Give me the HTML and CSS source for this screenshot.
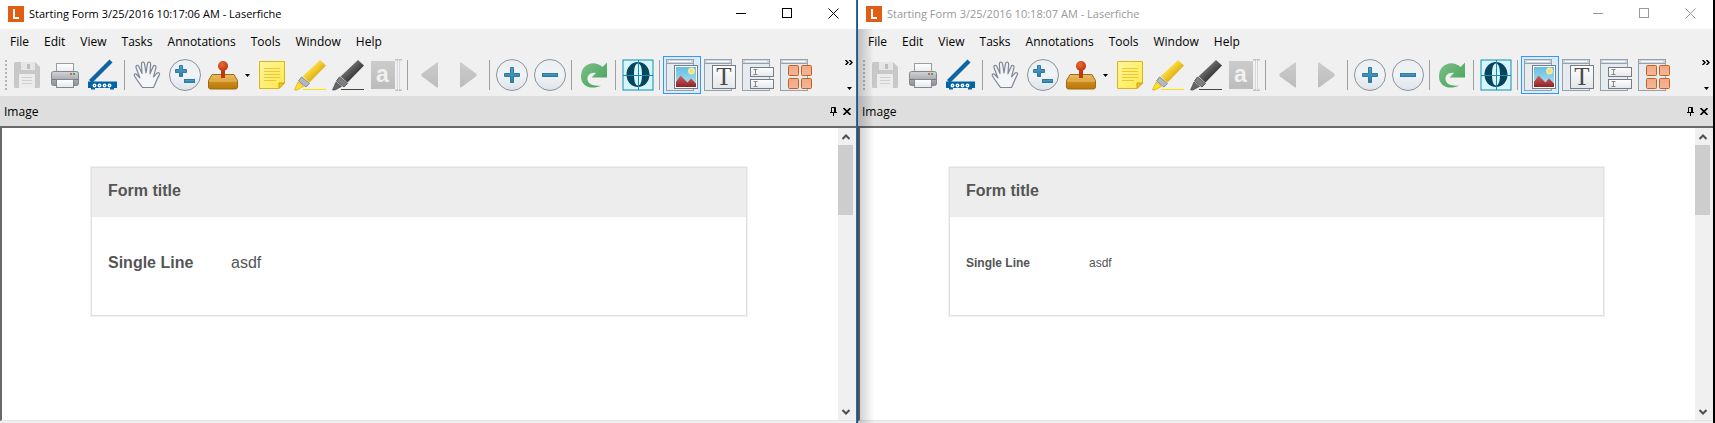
FILE: index.html
```
<!DOCTYPE html>
<html lang="en">
<head>
<meta charset="UTF-8">
<meta name="viewport" content="width=device-width, initial-scale=1.0">
<title>Laserfiche</title>
<link rel="stylesheet" href="styles.css">
</head>
<body>

<!-- toolbar icons, shared by both windows -->
<svg class="icon-defs" aria-hidden="true">
    <defs>
        <linearGradient id="gMetal" x1="0" y1="0" x2="0" y2="1"><stop offset="0" stop-color="#d2d4d8"/><stop offset="1" stop-color="#8b8e94"/></linearGradient>
        <linearGradient id="gPaper" x1="0" y1="0" x2="0" y2="1"><stop offset="0" stop-color="#ffffff"/><stop offset="1" stop-color="#e4e6e9"/></linearGradient>
        <linearGradient id="gCircle" x1="0" y1="0" x2="0" y2="1"><stop offset="0" stop-color="#eceff2"/><stop offset="0.5" stop-color="#f1f3f5"/><stop offset="1" stop-color="#dde4ea"/></linearGradient>
        <linearGradient id="gBlue" x1="0" y1="0" x2="0" y2="1"><stop offset="0" stop-color="#53a6cb"/><stop offset="1" stop-color="#2c7aa6"/></linearGradient>
        <linearGradient id="gGold" x1="0" y1="0" x2="0" y2="1"><stop offset="0" stop-color="#e8bb6a"/><stop offset="0.45" stop-color="#dea53f"/><stop offset="0.55" stop-color="#c98a17"/><stop offset="1" stop-color="#b97708"/></linearGradient>
        <radialGradient id="gKnob" cx="0.4" cy="0.35" r="0.6"><stop offset="0" stop-color="#ee6b35"/><stop offset="1" stop-color="#bd3a0f"/></radialGradient>
        <linearGradient id="gNote" x1="0" y1="0" x2="1" y2="1"><stop offset="0" stop-color="#fff6a0"/><stop offset="1" stop-color="#ffe94a"/></linearGradient>
        <linearGradient id="gYellow" x1="0" y1="0" x2="1" y2="1"><stop offset="0.3" stop-color="#ffe64d"/><stop offset="0.7" stop-color="#dca80c"/></linearGradient>
        <linearGradient id="gBlack" x1="0" y1="0" x2="1" y2="1"><stop offset="0.3" stop-color="#777777"/><stop offset="0.7" stop-color="#303030"/></linearGradient>
        <linearGradient id="gGray" x1="0" y1="0" x2="0" y2="1"><stop offset="0" stop-color="#cccccc"/><stop offset="1" stop-color="#bcbcbc"/></linearGradient>
        <linearGradient id="gGreen" x1="0" y1="0" x2="1" y2="1"><stop offset="0" stop-color="#7cc08a"/><stop offset="1" stop-color="#44a156"/></linearGradient>
        <linearGradient id="gSky" x1="0" y1="0" x2="0" y2="1"><stop offset="0" stop-color="#62bfe2"/><stop offset="1" stop-color="#b5e2ef"/></linearGradient>
        <linearGradient id="gRed" x1="0" y1="0" x2="0" y2="1"><stop offset="0" stop-color="#d85c5c"/><stop offset="1" stop-color="#8d2428"/></linearGradient>
        <linearGradient id="gTile" x1="0" y1="0" x2="0" y2="1"><stop offset="0" stop-color="#f3a987"/><stop offset="1" stop-color="#f4b595"/></linearGradient>
    </defs>

    <symbol id="logo" viewBox="0 0 16 16">
        <rect width="16" height="16" fill="#e05e14"/>
        <path d="M6 3v9h5" fill="none" stroke="#fff" stroke-width="2"/>
    </symbol>

    <symbol id="save" viewBox="0 0 32 32">
        <path d="M3 4.500Q3 3 4.500 3H24l5 5v19.500q0 1.500-1.500 1.500h-23Q3 29 3 27.500z" fill="#c8c8c8"/>
        <rect x="10" y="3" width="14" height="8" fill="#e6e6e6"/>
        <rect x="16" y="5" width="3" height="5" fill="#bdbdbd"/>
        <rect x="8" y="15" width="16" height="14" fill="#ececec"/>
        <path d="M11 18.500h10M11 21.500h10M11 24.500h10" stroke="#cfcfcf"/>
    </symbol>

    <symbol id="print" viewBox="0 0 32 32">
        <rect x="7.500" y="4.500" width="17" height="11" fill="url(#gPaper)" stroke="#9a9da2"/>
        <rect x="2.500" y="12.500" width="27" height="14" rx="2" fill="url(#gMetal)" stroke="#84878d"/>
        <path d="M3 20.500h26" stroke="#777a80"/>
        <rect x="21" y="14" width="2" height="2" fill="#ee5b2c"/>
        <rect x="24" y="14" width="2" height="2" fill="#3daa62"/>
        <rect x="7.500" y="20.500" width="17" height="8" fill="url(#gPaper)" stroke="#84878d"/>
    </symbol>

    <symbol id="scan" viewBox="0 0 32 32">
        <path d="M3.500 22.500L24 2" stroke="#0f65a3" stroke-width="4.200"/>
        <path d="M1 22.500h29v6.500h-3v1.500h-4v-1.500H8v1.500H4v-1.500H1z" fill="#0064a8"/>
        <g fill="#fff"><circle cx="7.500" cy="26.500" r="1.900"/><circle cx="12.500" cy="26.500" r="1.900"/><circle cx="17.500" cy="26.500" r="1.900"/><circle cx="22.500" cy="26.500" r="1.900"/></g>
        <g fill="#0064a8"><circle cx="7.500" cy="26.500" r=".5"/><circle cx="12.500" cy="26.500" r=".5"/><circle cx="17.500" cy="26.500" r=".5"/><circle cx="22.500" cy="26.500" r=".5"/></g>
    </symbol>

    <symbol id="hand" viewBox="0 0 32 32">
        <path d="M11.500 28.500C9 25 5.500 20.500 3.500 17c-.8-2 .9-2.800 2.200-1.500l3.100 3.300L5 8.500c-.5-2.300 2-2.900 2.900-1L11 14.500l-.6-9.700c0-2.300 2.700-2.300 3.100-.2L15 14l1.500-9.400c.5-2 3.100-1.800 3.100.3L19 14.800l3.200-7.300c.9-1.800 3.100-1 2.800.9l-2.500 9.400 3.500-3.600c1.400-1.200 3.400-.1 2.300 1.700C26 20 24.500 24 22.500 28.500z" fill="#f4f5f7" stroke="#7f8796" stroke-width="1.200" stroke-linejoin="round"/>
    </symbol>

    <symbol id="zoom" viewBox="0 0 32 32">
        <circle cx="16" cy="16" r="15.500" fill="url(#gCircle)" stroke="#8a929c"/>
        <path d="M10.500 6.500h3v4h4v3h-4v4h-3v-4h-4v-3h4z" fill="url(#gBlue)" stroke="#2d7ba5"/>
        <rect x="15.500" y="20.500" width="10" height="3" fill="url(#gBlue)" stroke="#2d7ba5"/>
    </symbol>

    <symbol id="stamp" viewBox="0 0 32 32">
        <path d="M5 15.500h22l3.500 6v6.500q0 2-2 2h-25q-2 0-2-2v-6.500z" fill="url(#gGold)" stroke="#a06a10"/>
        <path d="M2 22h28" stroke="#e5b357"/>
        <rect x="14" y="9" width="4" height="10" fill="#bd3a0f"/>
        <circle cx="16" cy="7" r="5" fill="url(#gKnob)"/>
    </symbol>

    <symbol id="note" viewBox="0 0 32 32">
        <path d="M3.500 2.500h25v21.500l-6 5.500h-19z" fill="url(#gNote)" stroke="#dcb31b"/>
        <path d="M28.500 24h-5.500v5.500z" fill="#f3c71c" stroke="#cf9d14"/>
        <path d="M8 9.500h16M8 12.500h16M8 15.500h16M8 18.500h16M8 21.500h12" stroke="#f3c52e"/>
    </symbol>

    <symbol id="marker" viewBox="0 0 32 32">
        <path d="M9 30.500h23" stroke="#ffe100"/>
        <path d="M26 1l6 5.500L15.500 23.500l-7-6z" fill="url(#gYellow)"/>
        <path d="M7.500 18l8 6.500-3.500 3.500-7.500-6z" fill="#b5b8bd" stroke="#898c91"/>
        <path d="M4 23l5.500 4.500L3 31H.5z" fill="#ffe21c" stroke="#c9a210" stroke-width=".6"/>
    </symbol>

    <symbol id="blackout" viewBox="0 0 32 32">
        <path d="M9 30.500h23" stroke="#444"/>
        <path d="M26 1l6 5.500L15.500 23.500l-7-6z" fill="url(#gBlack)"/>
        <path d="M7.500 18l8 6.500-3.500 3.500-7.500-6z" fill="#7d7f83" stroke="#595b5f"/>
        <path d="M4 23l5.500 4.500L3 31H.5z" fill="#666" stroke="#3c3c3c" stroke-width=".6"/>
    </symbol>

    <symbol id="textbox" viewBox="0 0 32 32">
        <rect x="1" y="2" width="24" height="28" fill="url(#gGray)"/>
        <path d="M25 .5h2l1.500 1 1.500-1h2M28.500 1v30M25 31.500h2l1.500-1 1.500 1h2" fill="none" stroke="#c2c2c2" stroke-width="2"/>
        <path d="M28.500 1v30" stroke="#f2f2f2"/>
    </symbol>

    <symbol id="prev" viewBox="0 0 32 32">
        <path d="M24 4v24q0 .8-1 .5L8 17.500q-1.500-1.500 0-3l15-11q1-.3 1 .5z" fill="url(#gGray)"/>
    </symbol>

    <symbol id="next" viewBox="0 0 32 32">
        <path d="M8 4v24q0 .8 1 .5l15-11q1.500-1.500 0-3l-15-11q-1-.3-1 .5z" fill="url(#gGray)"/>
    </symbol>

    <symbol id="plus" viewBox="0 0 32 32">
        <circle cx="16" cy="16" r="15.500" fill="url(#gCircle)" stroke="#8a929c"/>
        <path d="M14.500 8.500h3v6h6v3h-6v6h-3v-6h-6v-3h6z" fill="url(#gBlue)" stroke="#2d7ba5"/>
    </symbol>

    <symbol id="minus" viewBox="0 0 32 32">
        <circle cx="16" cy="16" r="15.500" fill="url(#gCircle)" stroke="#8a929c"/>
        <rect x="8.500" y="14.500" width="15" height="3" fill="url(#gBlue)" stroke="#2d7ba5"/>
    </symbol>

    <symbol id="refresh" viewBox="0 0 32 32">
        <path d="M24.500 8L29 3.500V18.500H13.500l4.500-4.500c-5-1-9 2-8.500 6.500.5 4.500 5.500 7 13.500 6C15 31 3 28.500 3 17.500 3 5 16 .5 24.500 8z" fill="url(#gGreen)"/>
    </symbol>

    <symbol id="omni" viewBox="0 0 32 32">
        <rect x="1" y="1" width="30" height="30" fill="#d5f6fd" stroke="#148db0"/>
        <path d="M16 3C22.500 3 27.500 8.500 27.500 15.500S22.500 28 16 28 4.500 22.500 4.500 15.500 9.500 3 16 3zm0 1.500c-3 0-4 5-4 11s1 11 4 11 4-5 4-11-1-11-4-11z" fill="#07455c" fill-rule="evenodd"/>
        <path d="M16.500 1v30M1 16.500h30" stroke="#148db0"/>
    </symbol>

    <!-- window frame under the four view icons -->
    <symbol id="pane" viewBox="0 0 32 32">
        <rect x=".5" y=".5" width="27" height="31" fill="#e6ebef" stroke="#98a0aa"/>
        <rect x="1" y="1" width="26" height="3" fill="#c9d6e3"/>
        <path d="M3 2.500h22" stroke="#fff"/>
        <path d="M1 4.500h26" stroke="#98a0aa"/>
    </symbol>

    <symbol id="view-image" viewBox="0 0 32 32">
        <use href="#pane"/>
        <rect x="8.500" y="6.500" width="23" height="23" fill="#fff" stroke="#747c88"/>
        <rect x="10" y="8" width="20" height="20" fill="url(#gSky)"/>
        <circle cx="25.500" cy="12" r="3.500" fill="#f4e9a6"/><circle cx="25.500" cy="12" r="2" fill="#f8dc6e"/>
        <path d="M10 28v-5l4.500-6.500 7 7 3.500-4 5 5V28z" fill="url(#gRed)"/>
    </symbol>

    <symbol id="view-text" viewBox="0 0 32 32">
        <use href="#pane"/>
        <rect x="8.500" y="6.500" width="23" height="23" fill="url(#gPaper)" stroke="#747c88"/>
    </symbol>

    <symbol id="view-fields" viewBox="0 0 32 32">
        <use href="#pane"/>
        <g fill="url(#gPaper)" stroke="#747c88"><rect x="8.500" y="8.500" width="23" height="9"/><rect x="8.500" y="20.500" width="23" height="9"/></g>
        <path d="M11.500 10.500h4M13.500 10.500v5M11.500 15.500h4M11.500 22.500h4M13.500 22.500v5M11.500 27.500h4" stroke="#888"/>
    </symbol>

    <symbol id="view-thumbs" viewBox="0 0 32 32">
        <use href="#pane"/>
        <g fill="url(#gTile)" stroke="#c2601f"><rect x="8.500" y="6.500" width="10" height="10" rx="1"/><rect x="21.500" y="6.500" width="10" height="10" rx="1"/><rect x="8.500" y="19.500" width="10" height="10" rx="1"/><rect x="21.500" y="19.500" width="10" height="10" rx="1"/></g>
    </symbol>

    <symbol id="win-min" viewBox="0 0 11 11"><path d="M0 5.500h10" stroke="currentColor"/></symbol>
    <symbol id="win-max" viewBox="0 0 11 11"><rect x=".5" y=".5" width="9" height="9" fill="none" stroke="currentColor"/></symbol>
    <symbol id="win-close" viewBox="0 0 11 11"><path d="M.5.5l10 10M10.500.5l-10 10" stroke="currentColor"/></symbol>
    <symbol id="caret" viewBox="0 0 5 3"><path d="M0 0h5L2.500 3z"/></symbol>
    <symbol id="chevrons" viewBox="0 0 8 5"><path d="M.5 0L3 2.500.5 5M4.500 0L7 2.500 4.500 5" fill="none" stroke="#000" stroke-width="1.500"/></symbol>
    <symbol id="pin" viewBox="0 0 7 9"><path d="M1.500 5V.5h4V5M4.500 1v4M0 5.500h7M3.500 6v3" fill="none" stroke="#000"/></symbol>
    <symbol id="cross" viewBox="0 0 8 7"><path d="M.5 0l7 7M7.500 0l-7 7" stroke="#000" stroke-width="1.600"/></symbol>
    <symbol id="arrow-up" viewBox="0 0 8 6"><path d="M.5 5L4 1.500 7.500 5" fill="none" stroke="#505050" stroke-width="2"/></symbol>
    <symbol id="arrow-down" viewBox="0 0 8 6"><path d="M.5 1L4 4.500 7.500 1" fill="none" stroke="#505050" stroke-width="2"/></symbol>
</svg>

<main class="desktop">

    <section class="window active">
        <header class="titlebar">
            <svg class="logo"><use href="#logo"/></svg>
            <h1>Starting Form 3/25/2016 10:17:06 AM - Laserfiche</h1>
            <button class="win-button" aria-label="Minimize"><svg><use href="#win-min"/></svg></button>
            <button class="win-button" aria-label="Maximize"><svg><use href="#win-max"/></svg></button>
            <button class="win-button" aria-label="Close"><svg><use href="#win-close"/></svg></button>
        </header>
        <nav class="menubar">
            <button>File</button>
            <button>Edit</button>
            <button>View</button>
            <button>Tasks</button>
            <button>Annotations</button>
            <button>Tools</button>
            <button>Window</button>
            <button>Help</button>
        </nav>
        <div class="toolbar">
            <span class="grip"></span>
            <button class="tool" aria-label="Save" disabled><svg><use href="#save"/></svg></button>
            <button class="tool" aria-label="Print"><svg><use href="#print"/></svg></button>
            <button class="tool" aria-label="Scan"><svg><use href="#scan"/></svg></button>
            <span class="sep"></span>
            <button class="tool" aria-label="Pan"><svg><use href="#hand"/></svg></button>
            <button class="tool" aria-label="Zoom"><svg><use href="#zoom"/></svg></button>
            <button class="tool" aria-label="Stamp"><svg><use href="#stamp"/></svg></button>
            <button class="drop" aria-label="Choose stamp"><svg><use href="#caret"/></svg></button>
            <button class="tool" aria-label="Sticky note"><svg><use href="#note"/></svg></button>
            <button class="tool" aria-label="Highlight"><svg><use href="#marker"/></svg></button>
            <button class="tool" aria-label="Black out"><svg><use href="#blackout"/></svg></button>
            <button class="tool" aria-label="Select text" disabled><svg><use href="#textbox"/><text x="6" y="23" class="glyph-a">a</text></svg></button>
            <span class="sep"></span>
            <button class="tool" aria-label="Previous page" disabled><svg><use href="#prev"/></svg></button>
            <button class="tool" aria-label="Next page" disabled><svg><use href="#next"/></svg></button>
            <span class="sep"></span>
            <button class="tool" aria-label="Zoom in"><svg><use href="#plus"/></svg></button>
            <button class="tool" aria-label="Zoom out"><svg><use href="#minus"/></svg></button>
            <span class="sep"></span>
            <button class="tool" aria-label="Rotate"><svg><use href="#refresh"/></svg></button>
            <span class="sep"></span>
            <button class="tool" aria-label="OCR"><svg><use href="#omni"/></svg></button>
            <span class="sep"></span>
            <button class="tool selected" aria-label="Image pane"><svg><use href="#view-image"/></svg></button>
            <button class="tool" aria-label="Text pane"><svg><use href="#view-text"/><text x="20" y="26" class="glyph-t">T</text></svg></button>
            <button class="tool" aria-label="Fields pane"><svg><use href="#view-fields"/></svg></button>
            <button class="tool" aria-label="Thumbnails pane"><svg><use href="#view-thumbs"/></svg></button>
            <button class="overflow" aria-label="More buttons">
                <svg class="chevrons"><use href="#chevrons"/></svg>
                <svg class="caret"><use href="#caret"/></svg>
            </button>
        </div>
        <div class="pane-header">
            <h2>Image</h2>
            <button aria-label="Pin"><svg class="pin"><use href="#pin"/></svg></button>
            <button aria-label="Close pane"><svg class="cross"><use href="#cross"/></svg></button>
        </div>
        <div class="viewer">
            <div class="page">
                <div class="form">
                    <h3>Form title</h3>
                    <dl>
                        <dt>Single Line</dt>
                        <dd>asdf</dd>
                    </dl>
                </div>
            </div>
            <div class="scrollbar">
                <button aria-label="Scroll up"><svg><use href="#arrow-up"/></svg></button>
                <div class="track"><div class="thumb"></div></div>
                <button aria-label="Scroll down"><svg><use href="#arrow-down"/></svg></button>
            </div>
        </div>
    </section>

    <section class="window inactive">
        <header class="titlebar">
            <svg class="logo"><use href="#logo"/></svg>
            <h1>Starting Form 3/25/2016 10:18:07 AM - Laserfiche</h1>
            <button class="win-button" aria-label="Minimize"><svg><use href="#win-min"/></svg></button>
            <button class="win-button" aria-label="Maximize"><svg><use href="#win-max"/></svg></button>
            <button class="win-button" aria-label="Close"><svg><use href="#win-close"/></svg></button>
        </header>
        <nav class="menubar">
            <button>File</button>
            <button>Edit</button>
            <button>View</button>
            <button>Tasks</button>
            <button>Annotations</button>
            <button>Tools</button>
            <button>Window</button>
            <button>Help</button>
        </nav>
        <div class="toolbar">
            <span class="grip"></span>
            <button class="tool" aria-label="Save" disabled><svg><use href="#save"/></svg></button>
            <button class="tool" aria-label="Print"><svg><use href="#print"/></svg></button>
            <button class="tool" aria-label="Scan"><svg><use href="#scan"/></svg></button>
            <span class="sep"></span>
            <button class="tool" aria-label="Pan"><svg><use href="#hand"/></svg></button>
            <button class="tool" aria-label="Zoom"><svg><use href="#zoom"/></svg></button>
            <button class="tool" aria-label="Stamp"><svg><use href="#stamp"/></svg></button>
            <button class="drop" aria-label="Choose stamp"><svg><use href="#caret"/></svg></button>
            <button class="tool" aria-label="Sticky note"><svg><use href="#note"/></svg></button>
            <button class="tool" aria-label="Highlight"><svg><use href="#marker"/></svg></button>
            <button class="tool" aria-label="Black out"><svg><use href="#blackout"/></svg></button>
            <button class="tool" aria-label="Select text" disabled><svg><use href="#textbox"/><text x="6" y="23" class="glyph-a">a</text></svg></button>
            <span class="sep"></span>
            <button class="tool" aria-label="Previous page" disabled><svg><use href="#prev"/></svg></button>
            <button class="tool" aria-label="Next page" disabled><svg><use href="#next"/></svg></button>
            <span class="sep"></span>
            <button class="tool" aria-label="Zoom in"><svg><use href="#plus"/></svg></button>
            <button class="tool" aria-label="Zoom out"><svg><use href="#minus"/></svg></button>
            <span class="sep"></span>
            <button class="tool" aria-label="Rotate"><svg><use href="#refresh"/></svg></button>
            <span class="sep"></span>
            <button class="tool" aria-label="OCR"><svg><use href="#omni"/></svg></button>
            <span class="sep"></span>
            <button class="tool selected" aria-label="Image pane"><svg><use href="#view-image"/></svg></button>
            <button class="tool" aria-label="Text pane"><svg><use href="#view-text"/><text x="20" y="26" class="glyph-t">T</text></svg></button>
            <button class="tool" aria-label="Fields pane"><svg><use href="#view-fields"/></svg></button>
            <button class="tool" aria-label="Thumbnails pane"><svg><use href="#view-thumbs"/></svg></button>
            <button class="overflow" aria-label="More buttons">
                <svg class="chevrons"><use href="#chevrons"/></svg>
                <svg class="caret"><use href="#caret"/></svg>
            </button>
        </div>
        <div class="pane-header">
            <h2>Image</h2>
            <button aria-label="Pin"><svg class="pin"><use href="#pin"/></svg></button>
            <button aria-label="Close pane"><svg class="cross"><use href="#cross"/></svg></button>
        </div>
        <div class="viewer">
            <div class="page">
                <div class="form small">
                    <h3>Form title</h3>
                    <dl>
                        <dt>Single Line</dt>
                        <dd>asdf</dd>
                    </dl>
                </div>
            </div>
            <div class="scrollbar">
                <button aria-label="Scroll up"><svg><use href="#arrow-up"/></svg></button>
                <div class="track"><div class="thumb"></div></div>
                <button aria-label="Scroll down"><svg><use href="#arrow-down"/></svg></button>
            </div>
        </div>
    </section>

</main>

</body>
</html>
```

FILE: styles.css
```
* {
    box-sizing: border-box;
}

body {
    margin: 0;
    font-family: "Open Sans", "Noto Sans", sans-serif;
    font-size: 12px;
    line-height: 16px;
    color: #000;
}

h1, h2, h3, dl, dd {
    margin: 0;
}

button {
    display: flex;
    align-items: center;
    justify-content: center;
    padding: 0;
    border: none;
    background: none;
    font: inherit;
    color: inherit;
}

svg {
    display: block;
}

.icon-defs {
    position: absolute;
    width: 0;
    height: 0;
}

.desktop {
    display: grid;
    grid-template-columns: 857fr 858fr;
    min-height: 100vh;
}

.window {
    display: flex;
    flex-direction: column;
    min-width: 0;
    background-color: #f0f0f0;
    position: relative;
}

.window.active {
    border-right: 1px solid #0078d7;
}

.window.inactive {
    border-left: 1px solid #4a4a4a;
    border-right: 2px solid #000;
}

/* shadow cast by the active window */
.window.inactive::before {
    content: "";
    position: absolute;
    top: 29px;
    bottom: 0;
    left: 0;
    width: 16px;
    background: linear-gradient(to right, rgba(0, 0, 0, 0.2), rgba(0, 0, 0, 0));
    pointer-events: none;
    z-index: 1;
}

/* title bar */
.titlebar {
    display: flex;
    align-items: center;
    height: 29px;
    padding: 0 0 2px 8px;
    background-color: #fff;
}

.titlebar h1 {
    flex: 1;
    margin-left: 5px;
    font-size: 11px;
    font-weight: normal;
    white-space: nowrap;
}

.inactive .titlebar h1,
.inactive .win-button {
    color: #999;
}

.logo {
    width: 16px;
    height: 16px;
}

.win-button {
    width: 46px;
    height: 27px;
}

.win-button svg {
    width: 11px;
    height: 11px;
}

/* menu */
.menubar {
    display: flex;
    gap: 15px;
    height: 25px;
    padding: 0 10px;
}

/* toolbar */
.toolbar {
    display: flex;
    align-items: center;
    height: 42px;
}

.grip {
    width: 2px;
    height: 30px;
    margin: 0 1px 0 5px;
    background: repeating-linear-gradient(to bottom, #b4b4b4 0, #b4b4b4 2px, transparent 2px, transparent 4px);
}

.tool {
    flex: none;
    width: 38px;
    height: 38px;
    border: 1px solid transparent;
}

.tool svg {
    width: 32px;
    height: 32px;
}

.tool.selected {
    border-color: #3399ff;
    background-color: #dcebfa;
}

.sep {
    flex: none;
    width: 6px;
    height: 30px;
    border-right: 3px solid transparent;
    border-left: 2px solid transparent;
    background: #a0a0a0;
    background-clip: padding-box;
}

.drop {
    flex: none;
    width: 11px;
    height: 38px;
}

.drop svg,
.caret {
    width: 5px;
    height: 3px;
}

.overflow {
    flex-direction: column;
    justify-content: space-between;
    width: 14px;
    height: 38px;
    margin-left: auto;
    padding: 4px 0;
}

.chevrons {
    width: 8px;
    height: 5px;
}

.glyph-a {
    font: bold 23px "Liberation Sans", Arial, sans-serif;
    fill: #f0f0f0;
}

.glyph-t {
    font: 25px "Liberation Serif", "Times New Roman", serif;
    fill: #4a4a4a;
    text-anchor: middle;
}

/* pane caption */
.pane-header {
    display: flex;
    align-items: center;
    height: 30px;
    padding: 0 2px 0 4px;
    background-color: #dedede;
}

.pane-header h2 {
    flex: 1;
    padding-top: 2px;
    font-size: 12px;
    font-weight: normal;
}

.pane-header button {
    width: 14px;
    height: 14px;
}

.pin {
    width: 7px;
    height: 9px;
}

.cross {
    width: 8px;
    height: 7px;
}

/* document area */
.viewer {
    display: flex;
    flex: 1;
    margin-bottom: 2px;
    border-top: 2px solid #696969;
    border-left: 2px solid #696969;
    border-bottom: 1px solid #e3e3e3;
    background-color: #fff;
}

.page {
    flex: 1;
    padding: 39px 91px 48px 89px;
}

.form {
    border: 1px solid #e1e1e1;
    outline: 1px solid #f0f0f0;
    font-family: "Liberation Sans", Arial, sans-serif;
    font-size: 16px;
    color: #555;
}

.form h3 {
    height: 49px;
    padding: 14px 16px;
    background-color: #ededed;
    font-size: 16px;
    line-height: 18px;
}

.form dl {
    display: grid;
    grid-template-columns: 123px 1fr;
    align-items: center;
    height: 98px;
    padding: 0 16px 6px;
}

.form dt {
    font-weight: bold;
}

.form.small dl {
    font-size: 12px;
}

.scrollbar {
    display: flex;
    flex-direction: column;
    width: 18px;
    border-right: 3px solid #f0f0f0;
    background-color: #f0f0f0;
}

.scrollbar button {
    height: 17px;
}

.scrollbar svg {
    width: 8px;
    height: 6px;
}

.track {
    flex: 1;
}

.thumb {
    height: 70px;
    background-color: #cdcdcd;
}
```
